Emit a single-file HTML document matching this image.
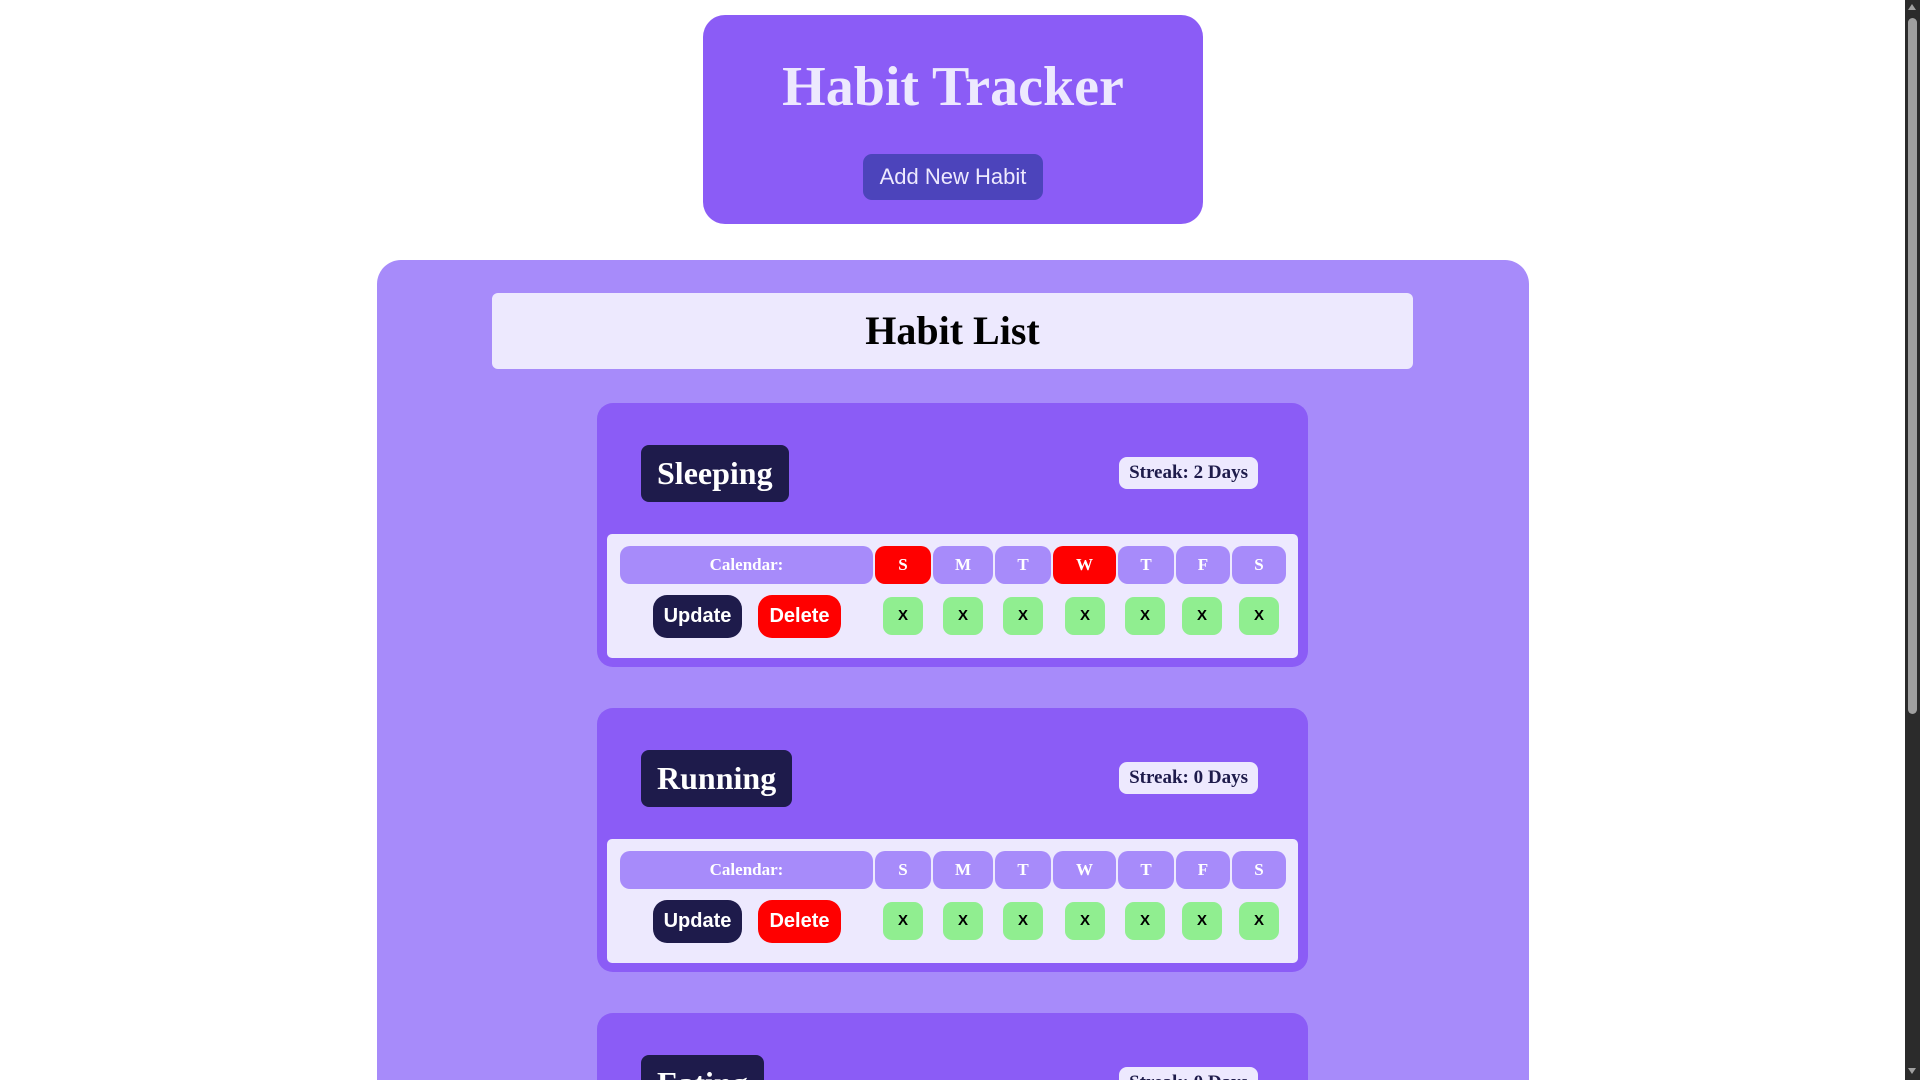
<!DOCTYPE html>
<html><head><meta charset="utf-8"><style>
*{box-sizing:border-box;margin:0;padding:0}
html,body{width:1920px;height:1080px;overflow:hidden;background:#fff;position:relative}
.serif{font-family:"Liberation Serif",serif;font-weight:bold}
.sans{font-family:"Liberation Sans",sans-serif}
.a{position:absolute}
.hdr{left:703px;top:15px;width:500px;height:209px;background:#8b5cf6;border-radius:22px}
.title{left:0;width:100%;top:37px;text-align:center;font-size:56px;color:#ede9fe;line-height:70px}
.addbtn{left:160px;top:139px;width:180px;height:46px;background:#4c44bb;border-radius:9px;color:#ede9fe;font-size:22px;line-height:46px;text-align:center}
.main{left:377px;top:260px;width:1152px;height:820px;background:#a78bfa;border-radius:24px 24px 0 0}
.hl{left:492px;top:293px;width:921px;height:76px;background:#ede9fe;border-radius:6px;text-align:center;font-size:40px;line-height:76px;color:#000}
.card{left:597px;width:711px;height:264px;background:#8b5cf6;border-radius:16px}
.name{left:44px;top:42px;height:57px;padding:0 16px;background:#1e1b4b;border-radius:8px;color:#fff;font-size:32px;line-height:57px}
.streak{right:50px;top:54px;height:32px;padding:0 10px;background:#ede9fe;border-radius:8px;color:#1e1b4b;font-size:19px;line-height:32px}
.panel{left:10px;top:131px;width:691px;height:124px;background:#ede9fe;border-radius:5px}
.c{top:12px;height:38px;background:#a78bfa;border-radius:10px;color:#fff;font-size:17px;line-height:38px;text-align:center}
.red{background:#ff0000}
.btn{top:61px;height:43px;border-radius:14px;color:#fff;font-weight:bold;font-size:20px;line-height:43px;text-align:center}
.x{top:63px;width:40px;height:38px;background:#90ee90;border-radius:9px;font-weight:bold;font-size:15px;line-height:38px;text-align:center;color:#000}
.sb{left:1905px;top:0;width:15px;height:1080px;background:#2b2b2b}
.wrap{left:0;top:0;width:1920px;height:1080px;overflow:hidden}
</style></head><body>
<div class="a wrap">
<div class="a hdr"><div class="a title serif">Habit Tracker</div><div class="a addbtn sans">Add New Habit</div></div>
<div class="a main"></div>
<div class="a hl serif">Habit List</div>

<div class="a card" style="top:403px">
<div class="a name serif">Sleeping</div><div class="a streak serif">Streak: 2 Days</div>
<div class="a panel">
<div class="a c serif" style="left:13px;width:253px">Calendar:</div>
<div class="a c serif red" style="left:268px;width:56px">S</div>
<div class="a c serif" style="left:326px;width:60px">M</div>
<div class="a c serif" style="left:388px;width:56px">T</div>
<div class="a c serif red" style="left:446px;width:63px">W</div>
<div class="a c serif" style="left:511px;width:56px">T</div>
<div class="a c serif" style="left:569px;width:54px">F</div>
<div class="a c serif" style="left:625px;width:54px">S</div>
<div class="a btn sans" style="left:46px;width:89px;background:#1e1b4b">Update</div>
<div class="a btn sans" style="left:151px;width:83px;background:#ff0000">Delete</div>
<div class="a x sans" style="left:276px">X</div><div class="a x sans" style="left:336px">X</div><div class="a x sans" style="left:396px">X</div><div class="a x sans" style="left:458px">X</div><div class="a x sans" style="left:518px">X</div><div class="a x sans" style="left:575px">X</div><div class="a x sans" style="left:632px">X</div>
</div></div>

<div class="a card" style="top:708px">
<div class="a name serif">Running</div><div class="a streak serif">Streak: 0 Days</div>
<div class="a panel">
<div class="a c serif" style="left:13px;width:253px">Calendar:</div>
<div class="a c serif" style="left:268px;width:56px">S</div>
<div class="a c serif" style="left:326px;width:60px">M</div>
<div class="a c serif" style="left:388px;width:56px">T</div>
<div class="a c serif" style="left:446px;width:63px">W</div>
<div class="a c serif" style="left:511px;width:56px">T</div>
<div class="a c serif" style="left:569px;width:54px">F</div>
<div class="a c serif" style="left:625px;width:54px">S</div>
<div class="a btn sans" style="left:46px;width:89px;background:#1e1b4b">Update</div>
<div class="a btn sans" style="left:151px;width:83px;background:#ff0000">Delete</div>
<div class="a x sans" style="left:276px">X</div><div class="a x sans" style="left:336px">X</div><div class="a x sans" style="left:396px">X</div><div class="a x sans" style="left:458px">X</div><div class="a x sans" style="left:518px">X</div><div class="a x sans" style="left:575px">X</div><div class="a x sans" style="left:632px">X</div>
</div></div>

<div class="a card" style="top:1013px;height:67px;border-radius:16px 16px 0 0;overflow:hidden">
<div class="a name serif">Eating</div><div class="a streak serif">Streak: 0 Days</div>
</div>

<div class="a sb">
<div class="a" style="left:3px;top:4px;width:0;height:0;border-left:4.5px solid transparent;border-right:4.5px solid transparent;border-bottom:6px solid #a0a0a0"></div>
<div class="a" style="left:3px;top:18px;width:9px;height:696px;background:#9f9f9f;border-radius:5px"></div>
<div class="a" style="left:3px;top:1068px;width:0;height:0;border-left:4.5px solid transparent;border-right:4.5px solid transparent;border-top:6px solid #a0a0a0"></div>
</div>
</div>
</body></html>
